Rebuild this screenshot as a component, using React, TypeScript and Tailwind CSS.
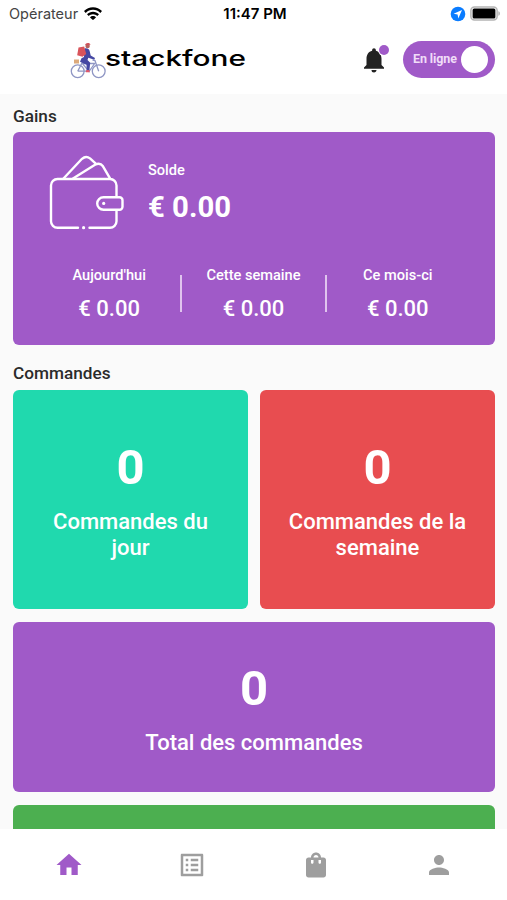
import { MdHome, MdListAlt, MdNotifications, MdPerson, MdShoppingBag } from "react-icons/md";
import clsx from "clsx";

const WifiIcon = () => (
    <svg width="18" height="13" viewBox="0 0 18 13" fill="#000">
        <path d="M0 4.1C2.4 1.6 5.5.2 9 .2s6.600 1.400 9 3.900l-1.700 1.800C14.400 3.900 11.800 2.700 9 2.700S3.600 3.900 1.700 5.900z" />
        <path d="M3 7.300C4.600 5.700 6.700 4.700 9 4.700s4.400 1 6 2.600l-1.700 1.800C12.200 7.900 10.700 7.200 9 7.200s-3.200.7-4.300 1.900z" />
        <path d="M6 10.400C6.800 9.600 7.800 9.100 9 9.100s2.200.5 3 1.300l-2.300 2.200a1 1 0 0 1-1.400 0z" />
    </svg>
);

const LocationIcon = () => (
    <svg width="16" height="16" viewBox="0 0 16 16">
        <circle cx="8" cy="8" r="7.300" fill="#0a7cff" />
        <path d="M12 4 3.600 7.700l4 .7.7 4z" fill="#fff" />
    </svg>
);

const BatteryIcon = () => (
    <svg width="31" height="15" viewBox="0 0 31 15">
        <rect x="0.900" y="0.900" width="26.200" height="13.200" rx="3.500" fill="#fff" stroke="#b4b4b4" strokeWidth="1.500" />
        <rect x="2.600" y="2.600" width="22.800" height="9.800" rx="1.500" fill="#000" />
        <path d="M28.500 5.200c1.600.5 1.600 4.100 0 4.600z" fill="#999" />
    </svg>
);

const Logo = () => (
    <svg width="178" height="38" viewBox="0 0 178 38">
        {/* Bike */}
        <g fill="none" stroke="#8f96c4" strokeWidth="1.300">
            <circle cx="7.700" cy="30.200" r="6.400" />
            <circle cx="28.700" cy="30.200" r="6.400" />
            <path d="M7.700 30.200 12 22l7 8.500 6-8.500M12 22.500h13M7.700 30.200h11M28.700 30.200 25 19.500l-2.500-.3" />
        </g>
        <rect x="4" y="18.500" width="5" height="4" fill="#dcaa7c" />
        {/* Rider */}
        <path d="M14.500 7.500c3-.5 4.500.5 5.200 2.700l1 4.300 4.300 2.500-.7 1.700-6-1.900-.8 2.200 2.700 2.800-.8 8h-2.700l-.2-6-6.500-3 1.500-3.500 2.500-1.300z" fill="#4548a3" />
        <path d="m8.500 6.500 5.700-1 2 7.500-3.700 2.700-5.300-1.400z" fill="#d9545b" />
        <circle cx="17.600" cy="5" r="2.200" fill="#b5625f" />
        <path d="M15.200 4C15.200 1.600 20 1.200 20.500 3.800z" fill="#d0505a" />
        <path d="m16 29.200 3-.2 1 2.200h-4.200z" fill="#e0566a" />
        <text
            x="35"
            y="25"
            textLength="141"
            lengthAdjust="spacingAndGlyphs"
            fill="#000"
            className="font-['Inter'] text-[22px] font-medium"
        >
            stackfone
        </text>
    </svg>
);

const WalletIcon = () => (
    <svg
        width="76"
        height="76"
        viewBox="49 155 76 76"
        fill="none"
        stroke="#fff"
        strokeWidth="2.400"
        strokeLinecap="round"
        strokeLinejoin="round"
    >
        <path d="M78 227.700H57.500a6.500 6.500 0 0 1-6.500-6.500V185.500a6.500 6.500 0 0 1 6.500-6.500h52.500a6.500 6.500 0 0 1 6.500 6.500V196" />
        <path d="M116.500 210.500v10.700a6.500 6.500 0 0 1-6.500 6.500H89.500" />
        <path d="M103.500 197.200h16a3 3 0 0 1 3 3v6.600a3 3 0 0 1-3 3h-16a6.300 6.300 0 0 1 0-12.600z" />
        <path d="M63.500 178.500 82 158.800q4-3.600 8-.4l5.500 5" />
        <path d="m73 178.500 22-13.700q5-2.600 8 1.500l7 12" />
        <circle cx="83.600" cy="227.700" r="1.600" fill="#fff" stroke="none" />
        <circle cx="103.700" cy="203.400" r="1.600" fill="#fff" stroke="none" />
    </svg>
);

const periods = [
    { label: "Aujourd'hui", amount: "€ 0.00" },
    { label: "Cette semaine", amount: "€ 0.00" },
    { label: "Ce mois-ci", amount: "€ 0.00" },
];

const tabs = [
    { name: "home", Icon: MdHome },
    { name: "orders", Icon: MdListAlt },
    { name: "bag", Icon: MdShoppingBag },
    { name: "profile", Icon: MdPerson },
];

const OrderCard = ({ count, label, className }: { count: number; label: string; className: string }) => (
    <div className={clsx("flex flex-col items-center rounded-md text-center text-white", className)}>
        <span className="text-[49px] leading-[58px] font-bold">{count}</span>
        <span className="mt-3 text-[22px] leading-[26px] font-medium">{label}</span>
    </div>
);

const App = () => {
    return (
        <div className="flex h-[900px] w-[507px] flex-col overflow-hidden bg-[#fafafa] font-['Roboto',sans-serif]">
            <header className="h-[94px] shrink-0 bg-white">
                <div className="grid h-[27px] grid-cols-3 items-center pr-[6px] pl-[9px] font-['Inter',sans-serif]">
                    <div className="flex items-center gap-[6px] text-[14.500px] text-[#444]">
                        Opérateur <WifiIcon />
                    </div>
                    <div className="pt-px text-center text-[15px] font-semibold text-black">11:47 PM</div>
                    <div className="flex items-center justify-end gap-1">
                        <LocationIcon />
                        <BatteryIcon />
                    </div>
                </div>
                <div className="flex h-[65px] items-center pr-3 pl-[70px]">
                    <Logo />
                    <div className="relative ml-auto">
                        <MdNotifications size={30} color="#222" />
                        <span className="absolute top-[0.500px] right-[0.500px] size-[10px] rounded-full bg-[#a05ac8] ring-1 ring-white" />
                    </div>
                    <button className="ml-[14px] flex h-[37px] w-[92px] items-center justify-between rounded-full bg-[#a05ac8] pr-[7px] pl-[10px]">
                        <span className="text-[12.500px] font-bold tracking-[-0.1px] text-[#f0dcf8]">En ligne</span>
                        <span className="size-[27px] rounded-full bg-white" />
                    </button>
                </div>
            </header>

            <main className="flex-1 overflow-hidden pt-[11px] pr-3 pl-[13px]">
                <h2 className="h-[27px] text-[17.200px] leading-[22px] font-medium text-[#2b2b2b]">Gains</h2>
                <section className="h-[213px] rounded-md bg-[#a05ac8] px-6 pt-[23px] text-white">
                    <div className="flex pl-3">
                        <WalletIcon />
                        <div className="ml-[23px] pt-[6px]">
                            <div className="text-[14.600px] leading-[18px] font-medium">Solde</div>
                            <div className="mt-[10px] text-[29.300px] leading-[36px] font-bold">€ 0.00</div>
                        </div>
                    </div>
                    <div className="mt-[35px] grid grid-cols-3 pr-px">
                        {periods.map((period, i) => (
                            <div key={period.label} className="relative text-center">
                                <div className="text-[14.600px] leading-[18px] font-medium">{period.label}</div>
                                <div className="mt-[11px] text-[22px] leading-[27px] font-medium">{period.amount}</div>
                                {i < 2 && <span className="absolute top-[9px] -right-px h-[37px] w-[2px] bg-[#e0c4ee]" />}
                            </div>
                        ))}
                    </div>
                </section>

                <h2 className="mt-[18px] h-[27px] text-[17.200px] leading-[21px] font-medium text-[#2b2b2b]">Commandes</h2>
                <div className="grid grid-cols-2 gap-x-[12px] gap-y-[13px]">
                    <OrderCard count={0} label="Commandes du jour" className="h-[219px] bg-[#20d9ae] px-9 pt-[49px]" />
                    <OrderCard count={0} label="Commandes de la semaine" className="h-[219px] bg-[#e84d50] px-6 pt-[49px]" />
                    <OrderCard count={0} label="Total des commandes" className="col-span-2 h-[170px] bg-[#a05ac8] pt-[38px]" />
                    <div className="col-span-2 h-[170px] rounded-md bg-[#4caf50]" />
                </div>
            </main>

            <nav className="flex h-[71px] shrink-0 bg-white pr-[6px] pl-[7px]">
                {tabs.map(({ name, Icon }, i) => (
                    <button key={name} aria-label={name} className="flex h-[71px] flex-1 items-center justify-center">
                        <Icon size={30} color={i === 0 ? "#a05ac8" : "#9e9e9e"} />
                    </button>
                ))}
            </nav>
        </div>
    );
};

export default App;
